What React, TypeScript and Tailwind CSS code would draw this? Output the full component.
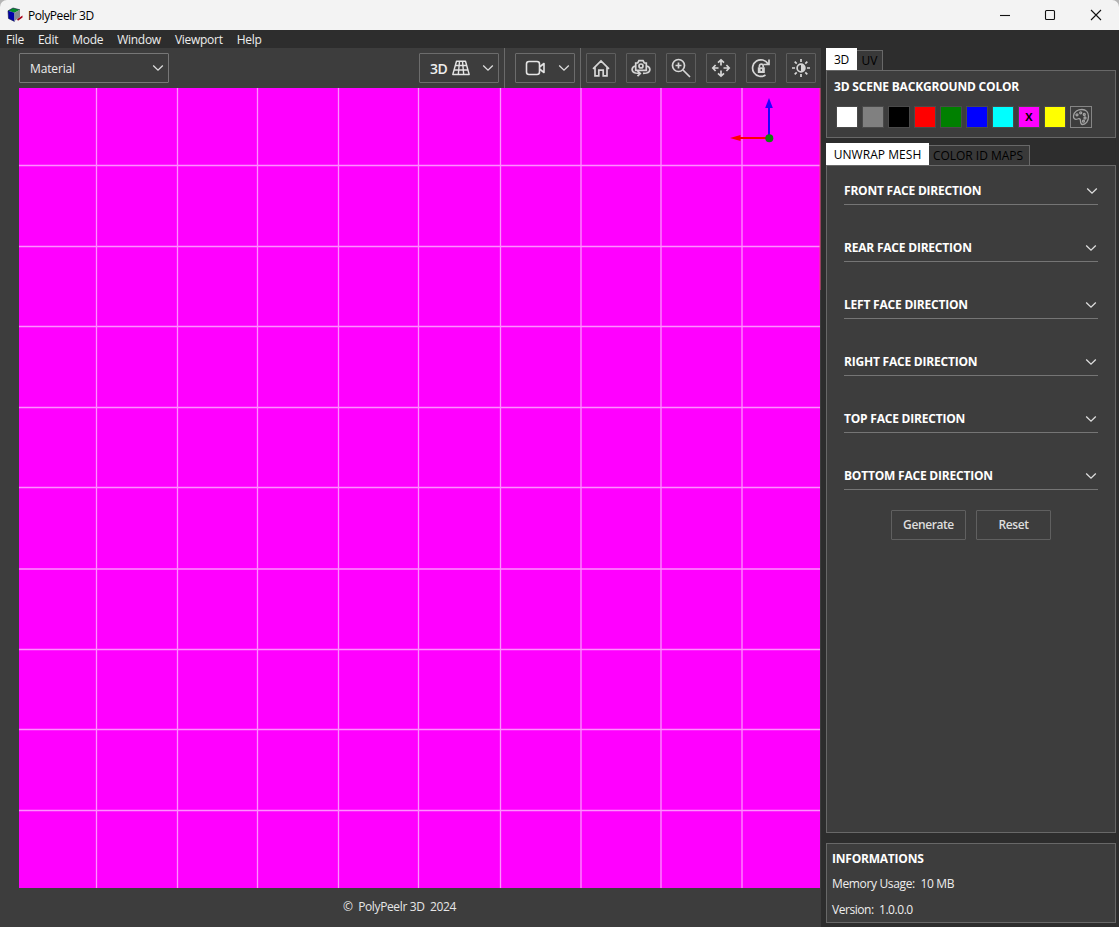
import React from "react";

const GRID_X = [96.5, 177.5, 257.5, 338.5, 418.5, 500.5, 581, 661, 742];
const GRID_Y = [165.5, 246.5, 326.5, 407.5, 487.5, 569, 649.5, 729.5, 810.5];

const FACES = [
  "FRONT FACE DIRECTION",
  "REAR FACE DIRECTION",
  "LEFT FACE DIRECTION",
  "RIGHT FACE DIRECTION",
  "TOP FACE DIRECTION",
  "BOTTOM FACE DIRECTION",
];

const SWATCHES = [
  "bg-white",
  "bg-[#808080]",
  "bg-black",
  "bg-[#ff0000]",
  "bg-[#008000]",
  "bg-[#0000ff]",
  "bg-[#00ffff]",
  "bg-[#ff00ff]",
  "bg-[#ffff00]",
];

function Chevron({ className = "" }: { className?: string }) {
  return (
    <svg width="12" height="8" viewBox="0 0 12 8" className={className} fill="none" stroke="#dedede" strokeWidth="1.3">
      <path d="M1.2 1.5 L6 6.2 L10.8 1.5" />
    </svg>
  );
}

function IconButton({ children }: { children: React.ReactNode }) {
  return (
    <button className="flex size-[30px] items-center justify-center rounded-[1px] border border-[#5e5e5e]">
      <svg width="22" height="22" viewBox="0 0 22 22" fill="none" stroke="#d6d6d6" strokeWidth="1.7">
        {children}
      </svg>
    </button>
  );
}

function TitleBar() {
  return (
    <header className="flex h-[30px] items-center rounded-t-[7px] bg-[#f3f3f3] pl-[7px] text-black">
      <svg width="16" height="16" viewBox="0 0 16 16">
        <path d="M1 3.8 L6 1 L13 2.8 L7.5 5.8 Z" fill="#078a2c" />
        <path d="M1 3.8 L7.5 5.8 V14.5 L1.5 11.5 Z" fill="#0000a8" />
        <path d="M7.5 5.8 L13 2.8 V10 L7.5 14 Z" fill="#858a90" />
        <path d="M10 12.3 L15.5 8.6 V10.4 L11 13.8 Z" fill="#a80018" />
        <path d="M1 3.8 L6 1 L13 2.8 M1 3.8 L1.5 11.5 L7.5 14.5" fill="none" stroke="#101840" strokeWidth=".6" />
      </svg>
      <span className="ml-[5px] pt-px text-[12px] tracking-[-0.42px]">PolyPeelr 3D</span>
      <svg className="ml-auto mr-[17px] -mt-px" width="103" height="12" viewBox="0 0 103 12" fill="none" stroke="#111" strokeWidth="1.1">
        <path d="M1 6.5 H11" />
        <rect x="46.5" y="1.5" width="9" height="9" rx="1" />
        <path d="M92 1 L102 11 M102 1 L92 11" />
      </svg>
    </header>
  );
}

function Viewport() {
  return (
    <svg className="block" width="802" height="800" viewBox="19 88 802 800">
      <rect x="19" y="88" width="801" height="800" fill="#ff00ff" />
      <g stroke="#ff8fff" strokeWidth="1.3">
        {GRID_X.map((x) => (
          <path key={x} d={`M${x} 88 V888`} />
        ))}
        {GRID_Y.map((y) => (
          <path key={y} d={`M19 ${y} H820`} />
        ))}
      </g>
      <path d="M820 88 V290" stroke="#f04080" strokeWidth="1" />
      <path d="M739 138 H769" stroke="#ff0000" strokeWidth="2" />
      <path d="M730 138 L740.5 135 V141 Z" fill="#ff0000" />
      <path d="M769 138 V107" stroke="#2200ff" strokeWidth="2" />
      <path d="M769 98 L772.8 108 H765.2 Z" fill="#2200ff" />
      <circle cx="769.3" cy="138.2" r="4" fill="#118011" />
    </svg>
  );
}

function Toolbar() {
  return (
    <div className="flex h-10 items-center pt-0.5 pb-[3px] pl-[19px] pr-[5px]">
      <button className="flex h-[30px] w-[150px] items-center justify-between rounded-[1px] border border-[#777] pl-[10px] pr-[4px] text-[12px] tracking-[-0.15px] text-[#ececec]">
        <span className="pt-0.5">Material</span>
        <Chevron />
      </button>
      <button className="ml-auto flex h-[30px] w-[80px] items-center rounded-[1px] border border-[#6c6c6c] pl-[10px] pr-[4px] text-[14px] font-semibold text-[#eee]">
        <span className="pt-0.5 tracking-[-0.4px]">3D</span>
        <svg className="ml-[5px]" width="18" height="16" viewBox="0 0 18 16" fill="none" stroke="#e4e4e4" strokeWidth="1.4" strokeLinejoin="round">
          <path d="M4.5 1.2 H13.5 L17.2 14.5 H0.8 Z M3.3 5.5 H14.7 M2 10 H16 M7.5 1.2 L6.3 14.5 M10.5 1.2 L11.7 14.5" />
        </svg>
        <Chevron className="ml-auto" />
      </button>
      <div className="ml-[5px] h-10 w-px bg-[#6a6a6a]" />
      <button className="ml-[10px] flex h-[30px] w-[60px] items-center justify-between rounded-[1px] border border-[#6c6c6c] pl-[9px] pr-[4px]">
        <svg width="21" height="16" viewBox="0 0 21 16" fill="none" stroke="#e4e4e4" strokeWidth="1.6" strokeLinejoin="round">
          <rect x="1.5" y="1.5" width="13" height="13" rx="2.5" />
          <path d="M14.5 7 L19 3.5 V12.5 L14.5 9" />
        </svg>
        <Chevron />
      </button>
      <div className="ml-[5px] h-10 w-px bg-[#6a6a6a]" />
      <div className="ml-[5px] flex gap-[10px]">
        <IconButton>
          <path d="M3 11.8 L11 4 L19 11.8 M5 10.2 V18.8 H8.8 V13.2 H13.2 V18.8 H17 V10.2" />
        </IconButton>
        <IconButton>
          <path d="M5.7 13.3 V6 H7.7 L9 3.6 H13 L14.3 6 H16.3 V13.3 Z" />
          <circle cx="11" cy="9" r="2" />
          <path d="M5.5 9 C1 10 1 15 5.5 16 L10 16.5 M7.5 13.8 L10.3 16.5 L7.5 19.2 M16.5 9 C21 10 21 15 16.5 16 L13 16.4" />
        </IconButton>
        <IconButton>
          <circle cx="8.5" cy="8.5" r="6" />
          <path d="M13 13 L20 20 M8.5 5.5 V11.5 M5.5 8.5 H11.5" />
        </IconButton>
        <IconButton>
          <path d="M11 3 V8.5 M11 13.5 V19 M3 11 H8.5 M13.5 11 H19 M8 5.6 L11 2.8 L14 5.6 M8 16.4 L11 19.2 L14 16.4 M5.6 8 L2.8 11 L5.6 14 M16.4 8 L19.2 11 L16.4 14" />
        </IconButton>
        <IconButton>
          <path d="M15.5 18 A8.3 8.3 0 1 1 18 6.8 M19 2.5 V7.5 H13.5" />
          <rect x="7.8" y="10.3" width="7" height="5.7" fill="#d6d6d6" stroke="none" />
          <path d="M9.4 10.5 V9 A1.9 1.9 0 0 1 13.2 9 V10.5" />
          <circle cx="11.3" cy="13" r=".9" fill="#3d3d3d" stroke="none" />
        </IconButton>
        <IconButton>
          <circle cx="11" cy="11" r="3.9" />
          <path d="M11 7.2 A3.8 3.8 0 0 1 11 14.8 Z" fill="#d6d6d6" stroke="none" />
          <path d="M11 2 V5 M11 17 V20 M2 11 H5 M17 11 H20 M4.7 4.7 L6.7 6.7 M15.3 15.3 L17.3 17.3 M17.3 4.7 L15.3 6.7 M6.7 15.3 L4.7 17.3" />
        </IconButton>
      </div>
    </div>
  );
}

function Sidebar() {
  return (
    <aside className="flex w-[298px] flex-col bg-[#2d2d2d] pl-[5px] pr-[3px]">
      <div className="flex h-[22px] items-end text-[12px]">
        <div className="flex h-[22px] w-[31px] items-center justify-center bg-white pt-px tracking-[-0.3px] text-black">3D</div>
        <div className="flex h-5 w-[26px] items-center justify-center border border-b-0 border-l-0 border-[#686868] bg-[#393939] text-black">UV</div>
      </div>
      <section className="h-[68px] border border-[#686868] bg-[#3d3d3d] pl-[7px] pt-[7px]">
        <h2 className="text-[12px] leading-[17px] font-bold tracking-[-0.19px] text-white">3D SCENE BACKGROUND COLOR</h2>
        <div className="mt-[11px] flex items-center gap-[6px] pl-[3px]">
          {SWATCHES.map((color, i) => (
            <button key={color} className={`flex size-5 items-center justify-center text-[12px] font-bold text-black ring-1 ring-[#4a4a4a] ${color}`}>
              {i === 7 ? <span className="pt-px text-[11px]">X</span> : null}
            </button>
          ))}
          <button className="-ml-[1px] flex size-[22px] items-center justify-center border border-[#858585]">
            <svg width="18" height="18" viewBox="0 0 18 18" className="shrink-0" fill="none" stroke="#a2a2a2" strokeWidth="1.3">
              <path d="M1.5 8 C2 3.5 6 1.5 10 1.5 C14 1.5 16.5 4.5 16.5 8.5 C16.5 13 14 16.5 10.5 16.5 C8.5 16.5 8.5 14.5 8.5 13 C8.5 11 7.5 10 5.5 11 C3 12 1.2 10.5 1.5 8 Z" />
              <circle cx="5" cy="6.8" r="1" />
              <circle cx="8.7" cy="4.8" r="1" />
              <circle cx="12.3" cy="6.5" r="1" />
              <circle cx="13" cy="10" r="1" />
              <circle cx="11.5" cy="13.2" r="1" />
            </svg>
          </button>
        </div>
      </section>
      <div className="mt-[5px] flex h-[22px] items-end text-[12px] text-black">
        <div className="flex h-[22px] w-[103px] items-center justify-center bg-white pt-px tracking-[0.05px]">UNWRAP MESH</div>
        <div className="flex h-5 w-[101px] items-center justify-center border border-b-0 border-l-0 border-[#686868] bg-[#393939] pr-[2px] tracking-[-0.02px]">COLOR ID MAPS</div>
      </div>
      <section className="h-[668px] border border-[#686868] bg-[#3d3d3d] px-[17px] pt-[10px]">
        {FACES.map((label, i) => (
          <div key={label} className="mb-[28px] flex h-[29px] items-center justify-between border-b border-[#757575] pt-[2px]">
            <span className="text-[12px] font-bold tracking-[-0.21px] text-white">{label}</span>
            <Chevron className={i === 0 ? "" : "mr-[1.5px]"} />
          </div>
        ))}
        <div className="-mt-[8px] flex justify-center gap-[10px] text-[12px] font-semibold tracking-[-0.4px] text-[#dedede]">
          <button className="h-[30px] w-[75px] rounded-[1px] border border-[#606060]">Generate</button>
          <button className="h-[30px] w-[75px] rounded-[1px] border border-[#606060]">Reset</button>
        </div>
      </section>
      <section className="mt-[10px] h-[80px] border border-[#686868] bg-[#3d3d3d] pl-[5px] pt-[6px] text-[12px] text-[#eee]">
        <h2 className="h-[25px] leading-[18px] font-bold tracking-[-0.22px] text-white">INFORMATIONS</h2>
        <p className="h-[26px] leading-[18px] whitespace-pre tracking-[-0.35px]">Memory Usage:  10 MB</p>
        <p className="leading-[18px] whitespace-pre tracking-[-0.45px]">Version:  1.0.0.0</p>
      </section>
    </aside>
  );
}

export default function App() {
  return (
    <div className="h-[927px] w-[1119px] overflow-hidden bg-[#2d2d2d] font-['Open_Sans','Noto_Sans',sans-serif]">
      <div className="bg-[#b4b4b4]">
        <TitleBar />
      </div>
      <nav className="flex h-[18px] items-center gap-[14px] pt-[2px] pl-[6px] text-[12px] tracking-[-0.27px] text-[#eee]">
        <span>File</span>
        <span>Edit</span>
        <span>Mode</span>
        <span>Window</span>
        <span>Viewport</span>
        <span>Help</span>
      </nav>
      <div className="flex h-[879px]">
        <main className="flex w-[821px] flex-col bg-[#3d3d3d]">
          <Toolbar />
          <div className="pl-[19px]">
            <Viewport />
          </div>
          <footer className="flex h-[38px] items-center justify-center pr-[22px] text-[12px] tracking-[-0.37px] whitespace-pre text-[#e6e6e6]">©  PolyPeelr 3D  2024</footer>
        </main>
        <Sidebar />
      </div>
    </div>
  );
}
